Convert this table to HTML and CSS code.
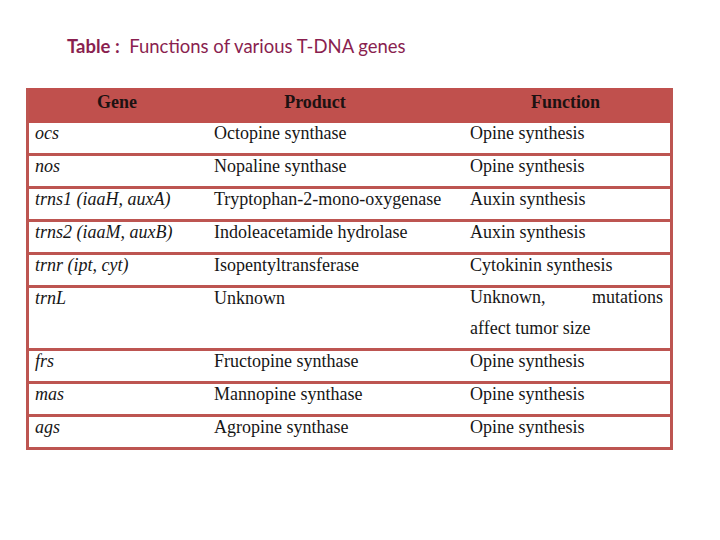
FILE: index.html
```html
<!DOCTYPE html>
<html>
<head>
<meta charset="utf-8">
<link rel="stylesheet" href="styles.css">
</head>
<body>
<div class="page">
  <h1 class="title"><span class="title-label">Table :</span>&nbsp; Functions of various T-DNA genes</h1>
  <table class="genes">
    <thead>
      <tr>
        <th class="col-gene">Gene</th>
        <th class="col-product">Product</th>
        <th class="col-function">Function</th>
      </tr>
    </thead>
    <tbody>
      <tr><td class="gene">ocs</td><td>Octopine synthase</td><td>Opine synthesis</td></tr>
      <tr><td class="gene">nos</td><td>Nopaline synthase</td><td>Opine synthesis</td></tr>
      <tr><td class="gene">trns1 (iaaH, auxA)</td><td>Tryptophan-2-mono-oxygenase</td><td>Auxin synthesis</td></tr>
      <tr><td class="gene">trns2 (iaaM, auxB)</td><td>Indoleacetamide hydrolase</td><td>Auxin synthesis</td></tr>
      <tr><td class="gene">trnr (ipt, cyt)</td><td>Isopentyltransferase</td><td>Cytokinin synthesis</td></tr>
      <tr class="tall"><td class="gene">trnL</td><td>Unknown</td><td class="multi"><div class="multi-text">Unknown, mutations affect tumor size</div></td></tr>
      <tr><td class="gene">frs</td><td>Fructopine synthase</td><td>Opine synthesis</td></tr>
      <tr><td class="gene">mas</td><td>Mannopine synthase</td><td>Opine synthesis</td></tr>
      <tr><td class="gene">ags</td><td>Agropine synthase</td><td>Opine synthesis</td></tr>
    </tbody>
  </table>
</div>
</body>
</html>
```
FILE: styles.css
```css
html, body {
  margin: 0;
  padding: 0;
  background: #ffffff;
}

.page {
  width: 720px;
  height: 540px;
  padding: 33px 0 0 26px;
  box-sizing: border-box;
}

.title {
  margin: 0 0 0 41px;
  font-family: "Lato", "Open Sans", sans-serif;
  font-weight: normal;
  font-size: 18.5px;
  line-height: 26px;
  color: #8a1f50;
  height: 55px;
}

.title-label {
  font-weight: bold;
}

.genes {
  width: 647px;
  border-collapse: separate;
  border-spacing: 0;
  border-left: 3px solid #bd5551;
  border-right: 3px solid #bd5551;
  table-layout: fixed;
  font-family: "Liberation Serif", "Times New Roman", serif;
  font-size: 18px;
  color: #161616;
}

.genes th {
  background: #c0504d;
  height: 35px;
  padding: 0 0 7px 0;
  box-sizing: border-box;
  font-weight: bold;
  text-align: center;
  color: #1d1212;
  vertical-align: middle;
}

.col-gene { width: 176px; }
.col-product { width: 256px; padding-right: 36px !important; }
.col-function { width: 209px; }

.genes td {
  height: 33px;
  box-sizing: border-box;
  padding: 0 7px 0 9px;
  border-bottom: 3px solid #bd5551;
  vertical-align: top;
  line-height: 21px;
  white-space: nowrap;
}

.genes td.gene {
  font-style: italic;
  padding-left: 6px;
}

.genes tr.tall td {
  height: 63px;
}

.genes td.multi {
  white-space: normal;
}

.multi-text {
  text-align: justify;
  line-height: 31px;
  margin-top: -6px;
}
```
